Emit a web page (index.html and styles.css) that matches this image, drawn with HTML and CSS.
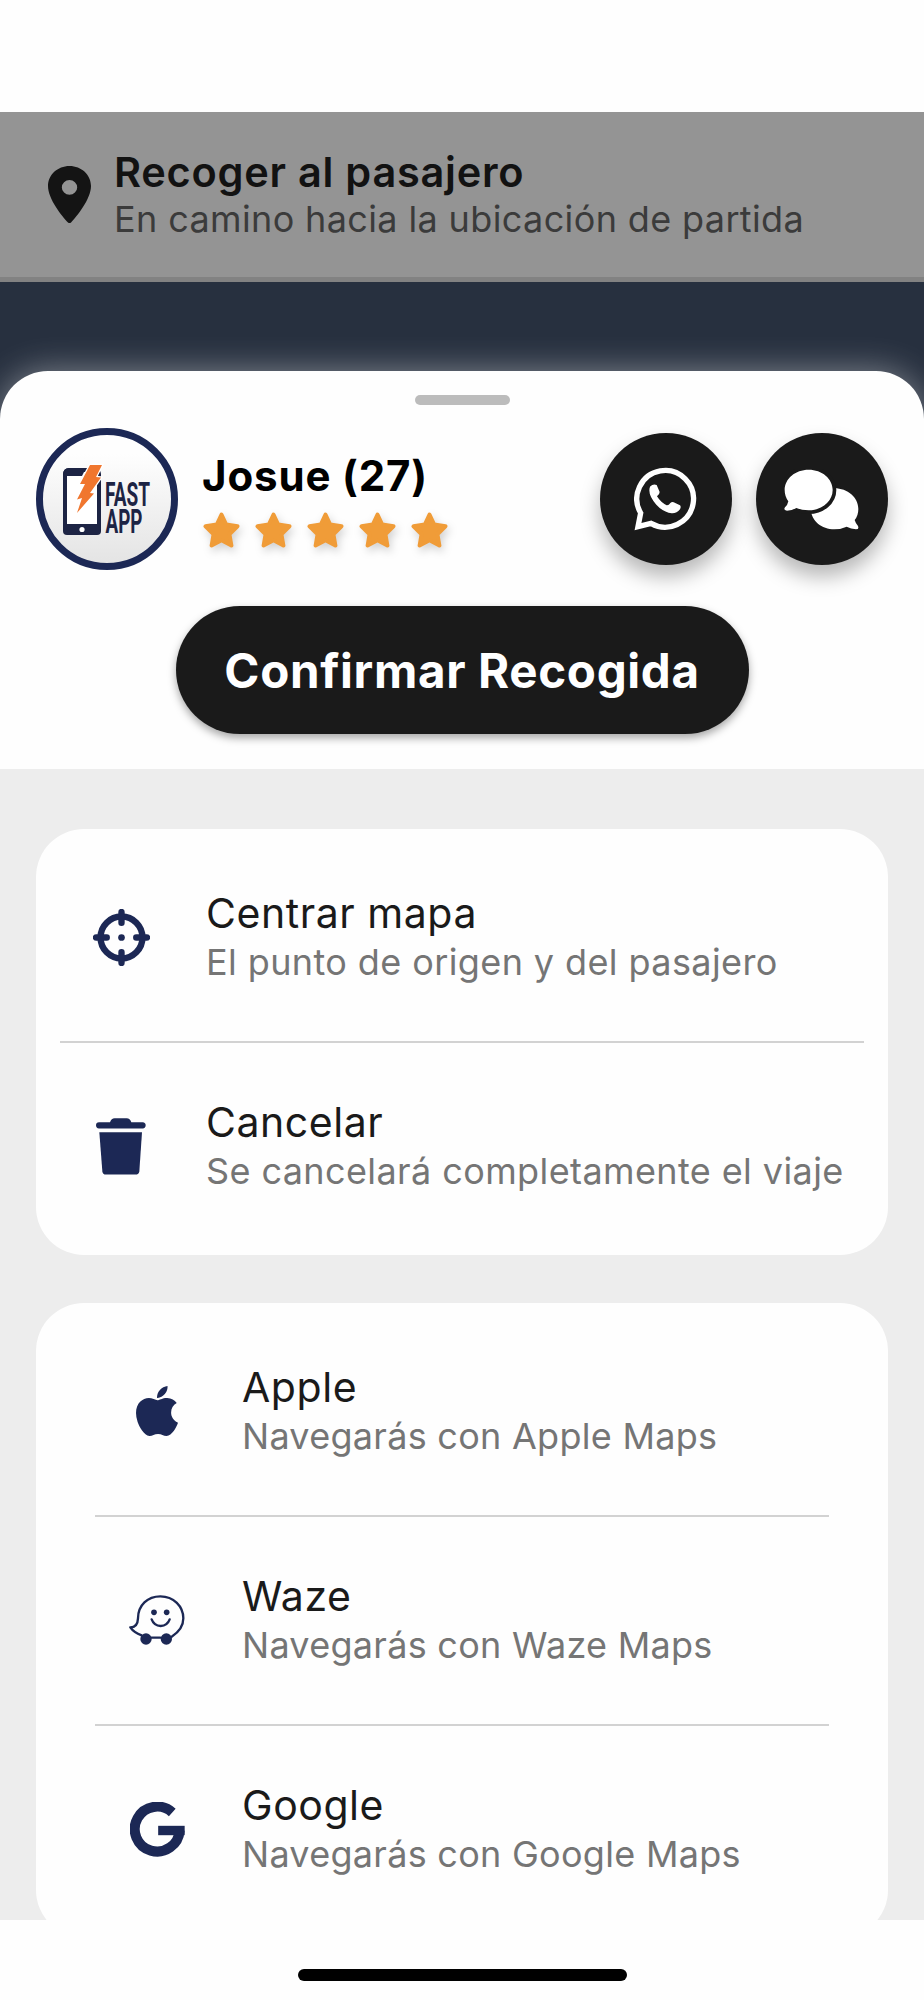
FILE: index.html
```
<!DOCTYPE html>
<html lang="es">
<head>
    <meta charset="UTF-8">
    <meta name="viewport" content="width=device-width, initial-scale=1.0">
    <title>Recoger al pasajero</title>
    <link rel="stylesheet" href="styles.css">
</head>
<body>
    <svg class="defs" width="0" height="0">
        <symbol id="star" viewBox="0 0 37 36">
            <path d="M18.5 2.5L23.2 12.5L34.5 14.3L26.4 22.2L28.4 33.5L18.5 28.3L8.6 33.5L10.6 22.2L2.5 14.3L13.8 12.5Z" stroke-width="4" stroke-linejoin="round"/>
        </symbol>
    </svg>

    <header class="trip-status">
        <svg class="pin" viewBox="5 2 14 20" preserveAspectRatio="none">
            <path fill-rule="evenodd" d="M12 2C8.1 2 5 5.1 5 9c0 4.6 4.6 10.6 6.5 12.8q.5.4 1 0C14.4 19.6 19 13.6 19 9c0-3.9-3.1-7-7-7zM12 6.9a2.5 2.6 0 1 1 0 5.2a2.5 2.6 0 1 1 0-5.2z"/>
        </svg>
        <div>
            <div class="status-title">Recoger al pasajero</div>
            <div class="status-text">En camino hacia la ubicación de partida</div>
        </div>
    </header>

    <div class="map"></div>

    <main class="sheet">
        <div class="handle"></div>

        <section class="passenger">
            <div class="avatar">
                <svg viewBox="0 0 142 142">
                    <rect x="29" y="42" width="34" height="62" rx="4" fill="#fff" stroke="#1d2444" stroke-width="4"/>
                    <path d="M27 96h38v7q0 4-4 4H31q-4 0-4-4z" fill="#1d2444"/>
                    <path d="M27 47q0-7 6-7h17l-4 8H27z" fill="#1d2444"/>
                    <circle cx="46" cy="101.5" r="2.6" fill="#fff"/>
                    <path d="M54 37H66L60 49L65 49.5L54 65L58 65.5L41 85L46 70L41 71.5L49 56H44Z" fill="#f0762e" stroke="#fff" stroke-width="2.5" paint-order="stroke"/>
                    <text x="69" y="78" textLength="45" lengthAdjust="spacingAndGlyphs">FAST</text>
                    <text x="69.5" y="104.5" textLength="37" lengthAdjust="spacingAndGlyphs">APP</text>
                </svg>
            </div>
            <div class="passenger-info">
                <div class="name">Josue (27)</div>
                <div class="stars">
                    <svg><use href="#star"/></svg>
                    <svg><use href="#star"/></svg>
                    <svg><use href="#star"/></svg>
                    <svg><use href="#star"/></svg>
                    <svg><use href="#star"/></svg>
                </div>
            </div>
            <button class="round-btn">
                <svg width="63" height="64" viewBox="222 200 189 192">
                    <path d="M273 369A85 85 0 1 0 242 338L234 379Z" fill="none" stroke="#fff" stroke-width="16"/>
                    <path d="M271 258Q280 249 290 254L299 275Q299 282 291 288Q302 306 320 315Q326 316 331 308Q336 303 341 306L360 315Q364 319 360 327Q350 340 335 339Q310 336 289 313Q268 290 268 270Q268 262 271 258Z" fill="#fff"/>
                </svg>
            </button>
            <button class="round-btn">
                <svg width="75" height="61" viewBox="671 208 225 183">
                    <path d="M822 266C862 266 894 293 894 328Q894 348 883 361Q885 369 893 379Q897 389 887 389Q872 388 859 381Q842 389 822 389C784 389 753 364 751 328C751 293 782 266 822 266Z" fill="#fff"/>
                    <path d="M745 210C785 210 817 237 817 271S785 332 745 332Q725 332 708 325Q694 333 680 333Q668 332 674 323Q682 316 684 305Q673 290 673 271C673 237 705 210 745 210Z" fill="#fff" stroke="#1a1a1a" stroke-width="22" paint-order="stroke"/>
                </svg>
            </button>
        </section>

        <button class="confirm">Confirmar Recogida</button>

        <section class="options">
            <div class="card">
                <div class="row">
                    <svg width="57" height="57" viewBox="38 58 170 170">
                        <g fill="none" stroke="#1c2855" stroke-width="19" stroke-linecap="round">
                            <circle cx="123" cy="143" r="62.5"/>
                            <path d="M123 67v32M123 187v32M47 143h32M167 143h32"/>
                        </g>
                        <circle cx="123" cy="143" r="10"/>
                    </svg>
                    <div>
                        <div class="row-title">Centrar mapa</div>
                        <div class="row-text">El punto de origen y del pasajero</div>
                    </div>
                </div>
                <div class="row">
                    <svg width="50" height="57" viewBox="50 53 150 170">
                        <path d="M59 65H92Q96 53 106 53H142Q152 53 156 65H190Q199 66 199 74T190 84H59Q50 83 50 74T59 65Z"/>
                        <path d="M60 95H188L180 212Q179 222 168 222H80Q70 222 69 212Z"/>
                    </svg>
                    <div>
                        <div class="row-title">Cancelar</div>
                        <div class="row-text">Se cancelará completamente el viaje</div>
                    </div>
                </div>
            </div>

            <div class="card maps">
                <div class="row">
                    <svg width="42" height="50" viewBox="4 32 376 448">
                        <path d="M318.7 268.7c-.2-36.7 16.4-64.4 50-84.8-18.8-26.9-47.2-41.7-84.7-44.6-35.5-2.8-74.3 20.7-88.5 20.7-15 0-49.4-19.7-76.4-19.7C63.3 141.2 4 184.8 4 273.5q0 39.3 14.4 81.2c12.8 36.7 59 126.7 107.2 125.2 25.2-.6 43-17.9 75.8-17.9 31.8 0 48.3 17.9 76.4 17.9 48.6-.7 90.4-82.5 102.6-119.3-65.2-30.7-61.7-90-61.7-91.9zm-56.6-164.2c27.3-32.4 24.8-61.9 24-72.5-24.1 1.4-52 16.4-67.9 34.9-17.5 19.8-27.8 44.3-25.6 71.9 26.1 2 49.9-11.4 69.5-34.3z"/>
                    </svg>
                    <div>
                        <div class="row-title">Apple</div>
                        <div class="row-text">Navegarás con Apple Maps</div>
                    </div>
                </div>
                <div class="row">
                    <svg width="56" height="50" viewBox="56 675 168 150">
                        <g fill="none" stroke="#1c2855" stroke-width="7" stroke-linecap="round" stroke-linejoin="round">
                            <path d="M94 796Q70 787 60 772Q82 772 83 745C83 706 112 679 150 679C190 679 219 709 219 745Q219 778 184 800M124 803H150"/>
                            <path d="M124 748Q131 767 151 768Q171 767 178 748"/>
                        </g>
                        <circle cx="107" cy="807" r="17"/>
                        <circle cx="168" cy="807" r="17"/>
                        <circle cx="131" cy="727" r="8.5"/>
                        <circle cx="169" cy="727" r="8.5"/>
                    </svg>
                    <div>
                        <div class="row-title">Waze</div>
                        <div class="row-text">Navegarás con Waze Maps</div>
                    </div>
                </div>
                <div class="row">
                    <svg width="55" height="55" viewBox="58 63 164 164">
                        <path d="M184 94A67 67 0 1 0 206 148" fill="none" stroke="#1c2855" stroke-width="30"/>
                        <rect x="142" y="134" width="79" height="28"/>
                    </svg>
                    <div>
                        <div class="row-title">Google</div>
                        <div class="row-text">Navegarás con Google Maps</div>
                    </div>
                </div>
            </div>
        </section>
    </main>

    <footer class="home-bar"><div></div></footer>
</body>
</html>
```
FILE: styles.css
```
* {
    box-sizing: border-box;
}

body {
    margin: 0;
    width: 924px;
    height: 2000px;
    padding-top: 112px;
    overflow: hidden;
    display: flex;
    flex-direction: column;
    background-color: #fefefe;
    font-family: Inter, "Liberation Sans", sans-serif;
}

button {
    border: none;
    padding: 0;
    font-family: inherit;
    cursor: pointer;
}

.defs {
    position: absolute;
}

.trip-status {
    flex: none;
    height: 170px;
    padding: 35px 0 0 48px;
    display: flex;
    background-color: #949494;
    border-bottom: 5px solid #828282;
}

.pin {
    width: 43px;
    height: 57px;
    margin: 19px 23px 0 0;
    fill: #141414;
}

.status-title {
    font-size: 41.5px;
    line-height: 51px;
    font-weight: 600;
    letter-spacing: 0.75px;
    color: #121212;
    white-space: nowrap;
}

.status-text {
    font-size: 36px;
    line-height: 43px;
    letter-spacing: 0.37px;
    color: #3b3b3b;
    white-space: nowrap;
}

.map {
    flex: none;
    height: 89px;
    background-color: #27303f;
    /* keeps the map colour behind the rounded corners of the sheet */
    box-shadow: 0 60px 0 #27303f;
}

.sheet {
    position: relative;
    flex: none;
    height: 1549px;
    overflow: hidden;
    display: flex;
    flex-direction: column;
    align-items: center;
    background-color: #fefefe;
    border-radius: 48px 48px 0 0;
    box-shadow: 0 0 34px rgba(255, 255, 255, 0.42);
}

.handle {
    flex: none;
    width: 95px;
    height: 10px;
    margin-top: 24px;
    border-radius: 5px;
    background-color: #bcbcbc;
}

.passenger {
    flex: none;
    width: 100%;
    height: 142px;
    margin-top: 23px;
    padding: 0 36px;
    display: flex;
    align-items: center;
}

.avatar {
    width: 142px;
    height: 142px;
    border-radius: 50%;
    border: 7px solid #1c2855;
    background: linear-gradient(#fefefe 15%, #e4e4e4);
}

.avatar svg {
    display: block;
    width: 142px;
    height: 142px;
    margin: -7px;
    overflow: visible;
}

.avatar text {
    font-family: "Liberation Sans Narrow", Roboto, sans-serif;
    font-size: 33px;
    font-weight: 700;
    fill: #1d2444;
}

.passenger-info {
    flex: 1;
    margin-left: 24px;
}

.name {
    font-size: 42px;
    line-height: 50px;
    font-weight: 700;
    letter-spacing: 0.85px;
    color: #000;
}

.stars {
    display: flex;
    gap: 15px;
    margin: 11px 0 0 1px;
}

.stars svg {
    width: 37px;
    height: 36px;
    overflow: visible;
    fill: #f09c38;
    stroke: #f09c38;
    filter: drop-shadow(2px 4px 4px rgba(0, 0, 0, 0.18));
}

.round-btn {
    width: 132px;
    height: 132px;
    margin-left: 24px;
    padding: 0 2px 0 0;
    border-radius: 50%;
    display: flex;
    justify-content: center;
    align-items: center;
    background-color: #1a1a1a;
    box-shadow: 0 12px 20px rgba(0, 0, 0, 0.28);
}

.confirm {
    flex: none;
    width: 573px;
    height: 128px;
    margin-top: 36px;
    border-radius: 64px;
    background-color: #1a1a1a;
    color: #fff;
    font-size: 47.5px;
    font-weight: 700;
    letter-spacing: 0.65px;
    box-shadow: 0 4px 8px rgba(0, 0, 0, 0.35);
}

.options {
    flex: none;
    width: 100%;
    height: 1151px;
    margin-top: 35px;
    padding: 60px 36px 0;
    background-color: #ededed;
}

.card {
    padding: 4px 24px 5px;
    border-radius: 48px;
    background-color: #fefefe;
}

.card + .card {
    margin-top: 48px;
}

.maps {
    padding: 4px 59px 5px;
}

.row {
    height: 208px;
    display: grid;
    grid-template-columns: 122px 1fr;
    column-gap: 24px;
    align-items: center;
}

.maps .row {
    grid-template-columns: 124px 1fr;
}

.row + .row {
    height: 209px;
    padding-bottom: 1px;
    border-top: 2px solid #d2d2d2;
}

.row > svg {
    justify-self: center;
    fill: #1c2855;
}

.row-title {
    font-size: 41px;
    line-height: 50px;
    letter-spacing: 0.55px;
    color: #1a1a1a;
    white-space: nowrap;
}

.row-text {
    font-size: 36px;
    line-height: 48px;
    letter-spacing: 0.4px;
    color: #757575;
    white-space: nowrap;
}

.maps .row > div {
    margin-left: -1px;
}

.maps .row-text {
    letter-spacing: 0.28px;
}

.home-bar {
    flex: none;
    height: 80px;
    padding-top: 49px;
    display: flex;
    justify-content: center;
}

.home-bar div {
    width: 329px;
    height: 12px;
    border-radius: 6px;
    background-color: #000;
}
```
